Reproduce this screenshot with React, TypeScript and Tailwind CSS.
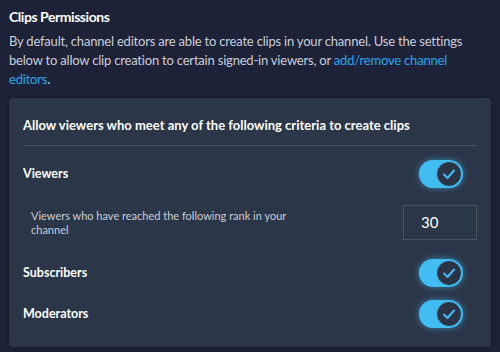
import React from "react";

function Toggle() {
  return (
    <div className="relative h-[28px] w-[44px] rounded-full bg-[#41bdf3] shadow-[0_0_6px_rgba(65,189,243,0.6)]">
      <div className="absolute right-[1px] top-[1px] flex h-[26px] w-[26px] items-center justify-center rounded-full border border-[#41bdf3] bg-[#2b3447]">
        <svg width="14" height="14" viewBox="0 0 14 14" fill="none">
          <path d="M2 7.5L5.5 11L12 3.5" stroke="#41bdf3" strokeWidth="2" strokeLinecap="round" strokeLinejoin="round" />
        </svg>
      </div>
    </div>
  );
}

export default function App() {
  return (
    <div className="h-[352px] w-[500px] bg-[#1e2238] px-[9px] pt-[7px] font-['Lato',sans-serif]">
      <h1 className="text-[14px] font-bold leading-[20px] tracking-[-0.45px] text-white">Clips Permissions</h1>
      <p className="mt-[5px] w-[470px] text-[13px] leading-[19px] tracking-[-0.2px] text-[#c9ced8]">
        By default, channel editors are able to create clips in your channel. Use the settings below to allow clip creation to certain signed-in viewers, or{" "}
        <a className="text-[#1fa8ea]">add/remove channel editors</a>.
      </p>
      <div className="mt-[9px] h-[249px] rounded-[4px] bg-[#2c3649] px-[14px] pt-[18px] shadow-[0_0_4px_rgba(0,0,0,0.3)]">
        <div className="text-[13px] font-bold leading-[19px] text-white">
          Allow viewers who meet any of the following criteria to create clips
        </div>
        <div className="mt-[10px] h-px bg-[#485266]" />
        <div className="mt-[14px] flex items-center justify-between pr-[14px]">
          <span className="text-[12.5px] font-bold text-white">Viewers</span>
          <Toggle />
        </div>
        <div className="mt-[17px] flex items-center justify-between">
          <span className="w-[270px] pl-[8px] text-[11px] leading-[14px] text-[#c9ced8]">
            Viewers who have reached the following rank in your channel
          </span>
          <div className="flex h-[35px] w-[74px] items-center border border-[#4a5262] pl-[17px] text-[15px] text-white">30</div>
        </div>
        <div className="mt-[19px] flex items-center justify-between pr-[14px]">
          <span className="text-[12.5px] font-bold text-white">Subscribers</span>
          <Toggle />
        </div>
        <div className="mt-[13px] flex items-center justify-between pr-[14px]">
          <span className="text-[12.5px] font-bold text-white">Moderators</span>
          <Toggle />
        </div>
      </div>
    </div>
  );
}
